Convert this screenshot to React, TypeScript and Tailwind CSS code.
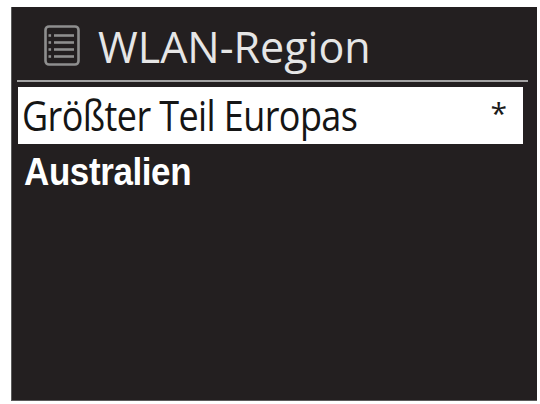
import React from "react";

function ListIcon() {
  return (
    <svg width="37" height="42" viewBox="0 0 37 42" className="shrink-0">
      <rect x="1.5" y="1.5" width="33" height="38" rx="3.5" fill="none" stroke="#8e8e8e" strokeWidth="2.6" />
      {[10.5, 17.5, 24.5, 31.5].map((y) => (
        <g key={y}>
          <rect x="4.5" y={y - 1.3} width="2.6" height="2.6" fill="#8e8e8e" />
          <line x1="10" y1={y} x2="30" y2={y} stroke="#8e8e8e" strokeWidth="2.6" />
        </g>
      ))}
    </svg>
  );
}

export default function App() {
  return (
    <div className="w-[540px] h-[404px] bg-white pt-[7px] pl-[11px] pr-[3px] pb-[3px]">
      <div className="w-[526px] h-[394px] bg-[#231f20] border-l border-b border-[#5a5a5a] px-[5px] flex flex-col">
        <div className="h-[73px] flex items-start shrink-0">
          <div className="ml-[27px] mt-[18px]">
            <ListIcon />
          </div>
          <div
            className="ml-[17px] mt-[19px] text-[43px] leading-[42px] text-[#e6e6e6] tracking-[0px]"
            style={{ fontFamily: '"Open Sans", sans-serif' }}
          >
            WLAN-Region
          </div>
        </div>
        <div className="h-[2px] w-[511px] bg-[#a3a3a3] shrink-0" />
        <div className="h-[5px] shrink-0" />
        <div
          className="h-[57px] w-[505px] ml-[1px] bg-white flex items-start justify-between pl-[4px] pr-[16px] shrink-0"
          style={{ fontFamily: '"Open Sans", sans-serif' }}
        >
          <span className="inline-block text-[36px] leading-[57px] pt-[2px] text-[#151515] tracking-[-0.6px] scale-y-[1.17] origin-[50%_44px]">
            Größter Teil Europas
          </span>
          <span className="text-[30px] leading-[30px] mt-[11px] text-[#1a1a1a]">*</span>
        </div>
        <div
          className="h-[57px] pl-[7px] text-[35px] leading-[57px] font-bold text-white tracking-[-0.4px] shrink-0"
          style={{ fontFamily: '"Liberation Sans", Arial, sans-serif' }}
        >
          <span className="inline-block scale-y-[1.12] origin-[50%_41px]">Australien</span>
        </div>
      </div>
    </div>
  );
}
